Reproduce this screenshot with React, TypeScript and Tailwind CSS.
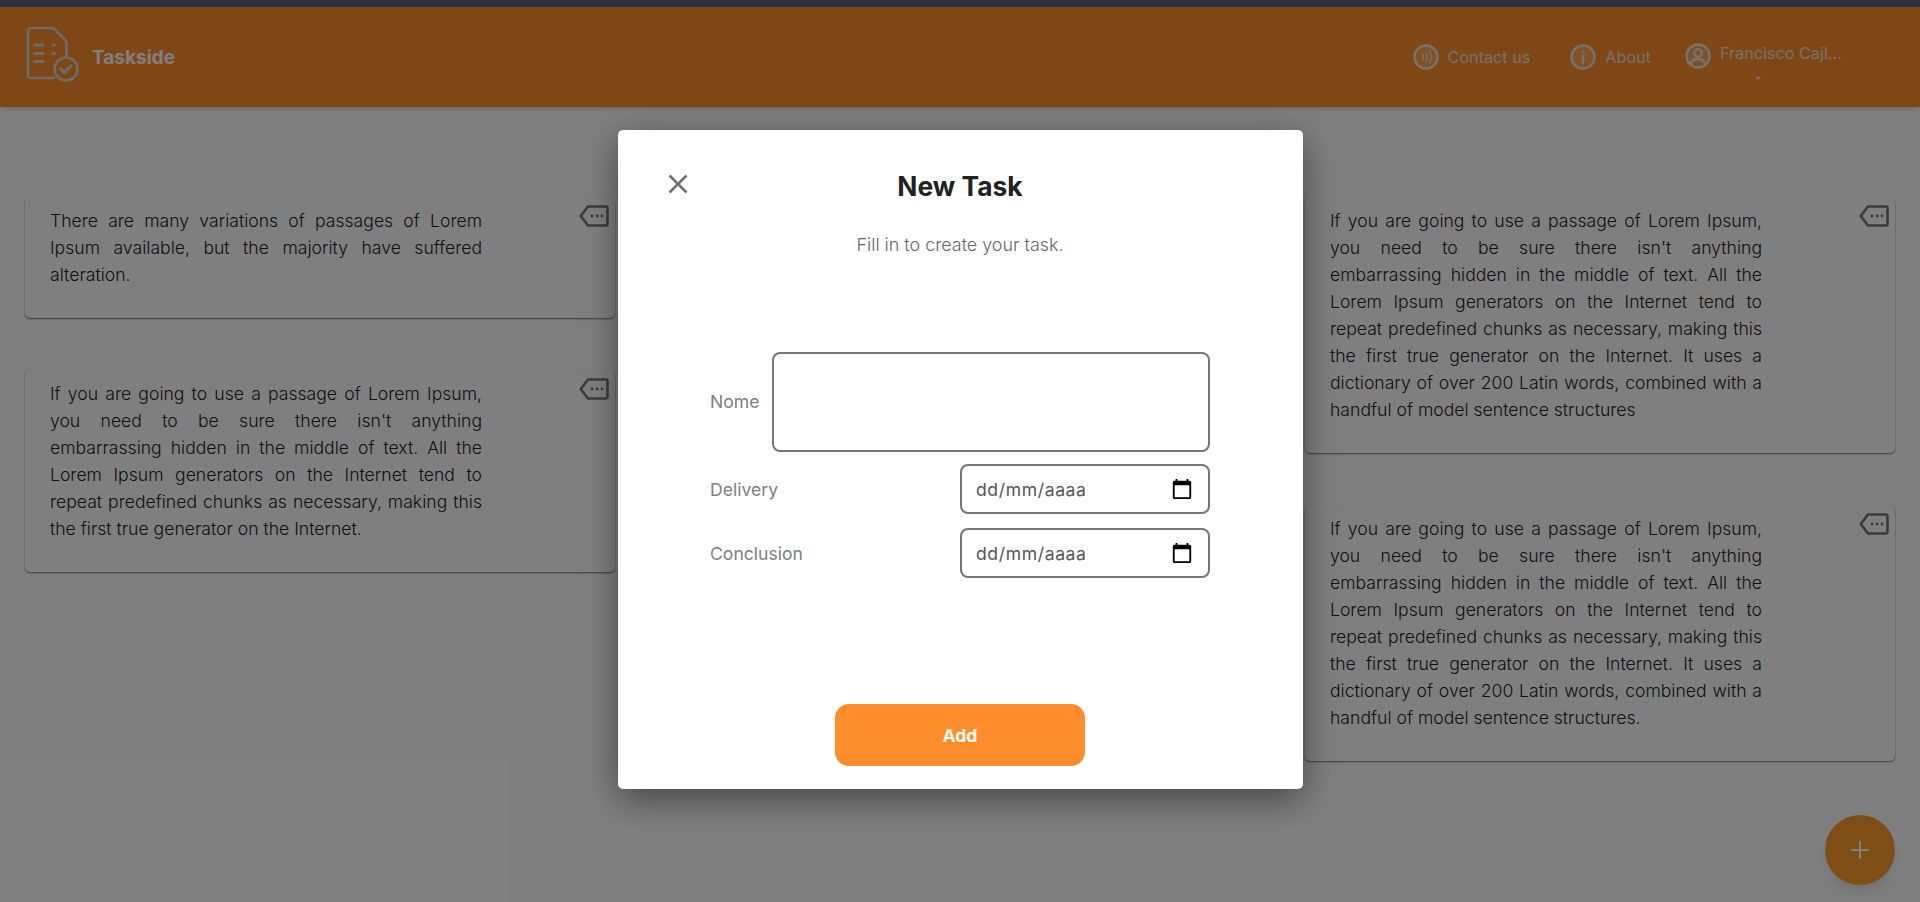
import React from "react";

const lorem =
  "If you are going to use a passage of Lorem Ipsum, you need to be sure there isn't anything embarrassing hidden in the middle of text. All the Lorem Ipsum generators on the Internet tend to repeat predefined chunks as necessary, making this the first true generator on the Internet.";

function TagIcon() {
  return (
    <svg viewBox="0 0 30 22" className="absolute top-[8px] right-[6px] w-[30px] h-[22px]" fill="none">
      <path d="M9 1.500h18a1.500 1.500 0 0 1 1.500 1.500v16a1.500 1.500 0 0 1-1.500 1.500H9L1.800 11z" stroke="#777" strokeWidth="2.600" strokeLinejoin="round" />
      <circle cx="13" cy="11" r="1.400" fill="#777" />
      <circle cx="18" cy="11" r="1.400" fill="#777" />
      <circle cx="23" cy="11" r="1.400" fill="#777" />
    </svg>
  );
}

function Card({ text }: { text: string }) {
  return (
    <div className="relative bg-white rounded-[5px] shadow-[0_1px_2px_rgba(0,0,0,0.55)] pt-[10px] pb-[30px] pl-[25px]">
      <p className="w-[432px] text-[17.6px] font-light leading-[27px] text-[#222] text-justify">{text}</p>
      <TagIcon />
    </div>
  );
}

function Logo() {
  return (
    <svg viewBox="0 0 54 56" className="w-[54px] h-[56px]" fill="none" stroke="#d8d8d8" strokeWidth="2.600" strokeLinecap="round" strokeLinejoin="round">
      <path d="M28 51H5a3 3 0 0 1-3-3V4a3 3 0 0 1 3-3h20c2 0 3 .5 4.500 2l9 9c1.500 1.500 2 2.500 2 4.500V30" />
      <path d="M9 18h8M9 26.500h8M9 34.500h8M27 18h1.500M27 26.500h1.500" strokeWidth="3" />
      <circle cx="40" cy="42" r="11.500" />
      <path d="M35 42l3.500 3.500 6.500-6.500" strokeWidth="3.200" />
    </svg>
  );
}

function Calendar() {
  return (
    <svg viewBox="0 0 24 24" className="w-[22px] h-[22px]" fill="#000">
      <path d="M20 3h-1V1h-2v2H7V1H5v2H4c-1.100 0-2 .9-2 2v16c0 1.100.9 2 2 2h16c1.100 0 2-.9 2-2V5c0-1.100-.9-2-2-2zm0 18H4V8h16v13z" />
    </svg>
  );
}

function DateRow({ label }: { label: string }) {
  return (
    <div className="flex items-center justify-between">
      <label className="text-[17.6px] text-[#808080] pt-[2px]">{label}</label>
      <div className="w-[250px] h-[50px] border-2 border-[#767676] rounded-lg flex items-center justify-between pl-[14px] pr-[15px]">
        <span className="text-[17.6px] text-[#555] tracking-[0.6px] pt-[2px]">dd/mm/aaaa</span>
        <Calendar />
      </div>
    </div>
  );
}

function App() {
  return (
    <div className="relative h-[902px] overflow-hidden bg-white font-['Inter',sans-serif]">
      {/* Top strip */}
      <div className="h-[7px] bg-[#566480]" />

      {/* Header */}
      <header className="h-[100px] bg-[#FF8F2A] shadow-md flex items-center justify-between pl-[26px] pr-[78px] text-white">
        <div className="flex items-center gap-[12px]">
          <div className="mb-[4px]">
            <Logo />
          </div>
          <span className="text-[19px] font-bold pt-[2px]">Taskside</span>
        </div>
        <nav className="flex items-center text-[#f0e4da] text-[16.2px]">
          <a className="flex items-center gap-[9px]">
            <svg viewBox="0 0 26 26" className="w-[26px] h-[26px]" fill="#ffffff33" stroke="#f0e4da" strokeWidth="2.400">
              <circle cx="13" cy="13" r="11.500" />
              <path d="M10 10.500v5M13 8.500c1.300 2.800 1.300 6.200 0 9M16.500 7c2 3.700 2 8.300 0 12" fill="none" strokeWidth="1.500" strokeLinecap="round" />
            </svg>
            Contact us
          </a>
          <a className="flex items-center gap-[9px] ml-[40px]">
            <svg viewBox="0 0 26 26" className="w-[26px] h-[26px]" fill="#ffffff33" stroke="#f0e4da" strokeWidth="2.400">
              <circle cx="13" cy="13" r="11.500" />
              <path d="M13 11.500v7" strokeWidth="2.400" strokeLinecap="round" />
              <circle cx="13" cy="7.800" r="1.300" fill="#f0e4da" stroke="none" />
            </svg>
            About
          </a>
          <a className="flex items-start gap-[9px] ml-[34px] mt-[6px]">
            <svg viewBox="0 0 26 26" className="w-[26px] h-[26px] mt-[3px]" fill="#ffffff33" stroke="#f0e4da" strokeWidth="2.400">
              <circle cx="13" cy="13" r="11.500" />
              <circle cx="13" cy="10" r="3.800" fill="none" />
              <path d="M5.500 21c1-3.500 4-5 7.500-5s6.500 1.500 7.500 5" fill="none" />
            </svg>
            <div className="flex flex-col w-[122px]">
              <span className="whitespace-nowrap leading-[26px]">Francisco Cajl...</span>
              <span className="mt-[11px] ml-[35px] w-0 h-0 border-x-[3px] border-x-transparent border-t-[3px] border-t-[#f0e4da]" />
            </div>
          </a>
        </nav>
      </header>

      {/* Task columns */}
      <main className="grid grid-cols-3 gap-x-[50px] px-[25px] pt-[90px]">
        <div className="flex flex-col gap-[52px]">
          <Card text="There are many variations of passages of Lorem Ipsum available, but the majority have suffered alteration." />
          <Card text={lorem} />
        </div>
        <div />
        <div className="flex flex-col gap-[52px]">
          <Card text={lorem + " It uses a dictionary of over 200 Latin words, combined with a handful of model sentence structures"} />
          <Card text={lorem + " It uses a dictionary of over 200 Latin words, combined with a handful of model sentence structures."} />
        </div>
      </main>

      <button className="absolute left-[1825px] top-[815px] w-[70px] h-[70px] rounded-full bg-[#FF9D2D] shadow-lg flex items-center justify-center">
        <svg viewBox="0 0 20 20" className="w-[20px] h-[20px]" stroke="#fff" strokeWidth="2">
          <path d="M10 1v18M1 10h18" />
        </svg>
      </button>

      {/* Modal */}
      <div className="absolute inset-0 bg-black/50 flex justify-center items-start pt-[130px]">
        <div className="relative w-[685px] h-[659px] bg-white rounded-[5px] shadow-[0_10px_35px_rgba(0,0,0,0.45)] flex flex-col items-center">
          <button className="absolute left-[50px] top-[44px]">
            <svg viewBox="0 0 20 20" className="w-[20px] h-[20px]" stroke="#707070" strokeWidth="2.600">
              <path d="M1.500 1.500l17 17M18.500 1.500l-17 17" />
            </svg>
          </button>
          <h2 className="mt-[37px] text-[26.400px] leading-[38px] font-bold text-[#222]">New Task</h2>
          <p className="mt-[28px] text-[17.9px] font-light leading-[24px] text-[#666]">Fill in to create your task.</p>

          <form className="mt-[95px] w-[500px] flex flex-col">
            <div className="flex items-center justify-between">
              <label className="text-[17.6px] text-[#808080]">Nome</label>
              <div className="w-[438px] h-[100px] border-2 border-[#767676] rounded-lg" />
            </div>
            <div className="mt-[12px]">
              <DateRow label="Delivery" />
            </div>
            <div className="mt-[14px]">
              <DateRow label="Conclusion" />
            </div>
          </form>

          <button className="mt-[126px] w-[250px] h-[62px] rounded-[14px] bg-[#FF8D2B] text-white text-[17.6px] font-bold pt-[2px]">Add</button>
        </div>
      </div>
    </div>
  );
}

export default App;
